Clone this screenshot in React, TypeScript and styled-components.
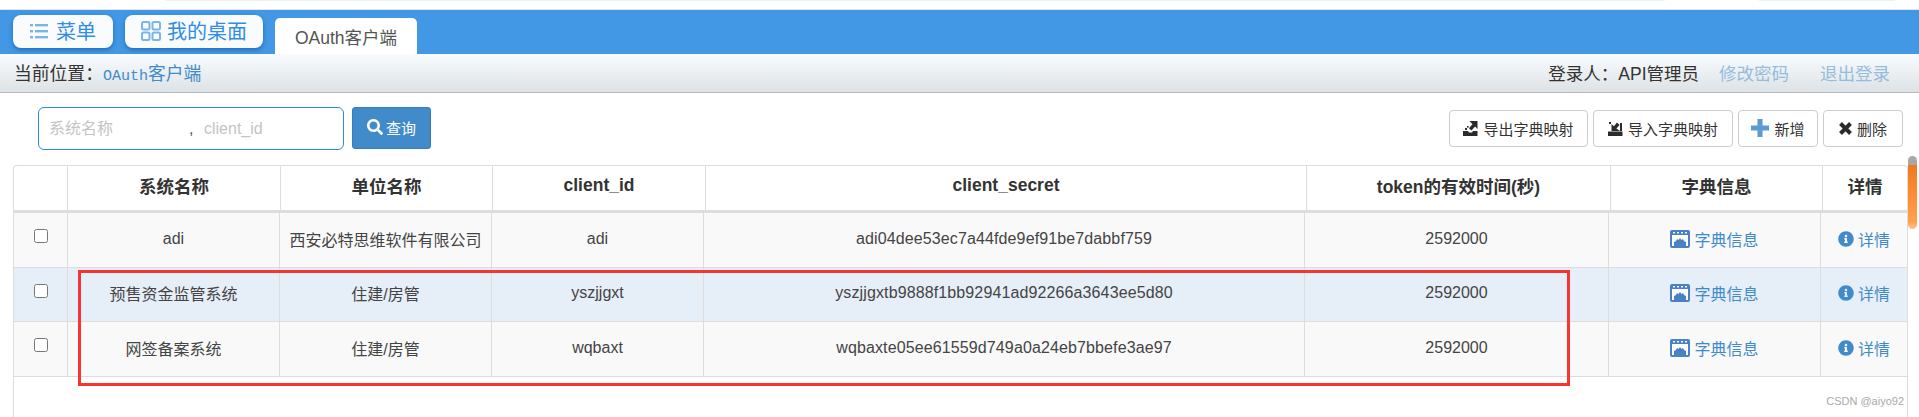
import React from 'react';
import styled, { createGlobalStyle } from 'styled-components';
import { FaSearch, FaInfoCircle } from 'react-icons/fa';

const FONT = '"Liberation Sans", "Noto Sans CJK SC", sans-serif';

const GlobalStyle = createGlobalStyle`
  html, body {
    margin: 0;
    padding: 0;
    height: 417px;
    overflow: hidden;
    background: #fff;
    font-family: ${FONT};
  }
  * { box-sizing: border-box; }
`;

const Page = styled.div`
  position: relative;
  width: 1919px;
  height: 417px;
  overflow: hidden;
  background: #fff;
`;

const TopStrip = styled.div`
  height: 10px;
  display: flex;
  align-items: flex-start;
  gap: 94px;
  padding-left: 165px;
  border-bottom: 1px solid #e2e4e6;
`;

const StripBar = styled.div`
  width: ${(p: { $w: number }) => p.$w}px;
  height: 1px;
  background: #eef0fa;
`;

const NavBar = styled.div`
  height: 44px;
  background: #4298e5;
  display: flex;
  align-items: flex-start;
  padding: 5px 0 0 13px;
  gap: 12px;
`;

const NavButton = styled.button`
  height: 33px;
  width: ${(p: { $w: number }) => p.$w}px;
  display: flex;
  align-items: center;
  justify-content: center;
  gap: 6px;
  padding: 0 0 2px;
  border: 0;
  border-radius: 8px;
  background: #fafbfd;
  box-shadow: 0 2px 4px rgba(20, 90, 170, 0.7);
  color: #2e8de8;
  font: 20px ${FONT};
`;

const Tab = styled.div`
  width: 142px;
  height: 36px;
  margin-top: 3px;
  display: flex;
  align-items: center;
  justify-content: center;
  background: #fff;
  border-radius: 5px 5px 0 0;
  color: #555;
  font-size: 17.5px;
`;

const CrumbBar = styled.div`
  height: 39px;
  display: flex;
  align-items: center;
  justify-content: space-between;
  padding: 0 29px 2px 14px;
  background: linear-gradient(#f8fcfe, #dde2e6);
  border-bottom: 1px solid #b2babf;
  font-size: 17.5px;
  color: #333;
`;

const Crumb = styled.div`
  display: flex;
  align-items: center;
  font-size: 17.8px;
`;

const CrumbLink = styled.span`
  color: #428bca;
`;

const CrumbMono = styled.span`
  font-family: "Liberation Mono", monospace;
  font-size: 15px;
`;

const UserInfo = styled.div`
  display: flex;
  align-items: center;
  gap: 20px;
`;

const UserLink = styled.a`
  color: #96bcdd;
  margin-left: ${(p: { $gap?: number }) => p.$gap ?? 0}px;
`;

const Toolbar = styled.div`
  height: 72px;
  display: flex;
  justify-content: space-between;
  padding: 14px 16px 0 38px;
`;

const SearchGroup = styled.div`
  display: flex;
  gap: 8px;
  height: 43px;
`;

const SearchField = styled.div`
  width: 306px;
  display: flex;
  align-items: center;
  padding-left: 10px;
  border: 1px solid #2d8ae0;
  border-radius: 6px;
  color: #555;
  font-size: 16px;
`;

const SearchInput = styled.input`
  width: ${(p: { $w: number }) => p.$w}px;
  border: 0;
  outline: 0;
  padding: 0;
  background: transparent;
  font: 16px ${FONT};
  &::placeholder { color: #c4c4c4; opacity: 1; }
`;

const Comma = styled.span`
  width: 15px;
`;

const QueryButton = styled.button`
  width: 79px;
  height: 42px;
  display: flex;
  align-items: center;
  justify-content: center;
  gap: 3px;
  padding: 0 0 2px;
  border: 1px solid #357ebd;
  border-radius: 3px;
  background: #428bca;
  color: #fff;
  font: 15px ${FONT};
`;

const ActionGroup = styled.div`
  display: flex;
  gap: 5px;
  padding-top: 3px;
`;

const ActionButton = styled.button`
  width: ${(p: { $w: number }) => p.$w}px;
  height: 37px;
  display: flex;
  align-items: center;
  justify-content: center;
  gap: 5px;
  padding: 0 0 1px;
  border: 1px solid #ccc;
  border-radius: 4px;
  background: #fff;
  color: #333;
  font: 15px ${FONT};
`;

const TableFrame = styled.div`
  margin-left: 13px;
  width: 1895px;
  height: 260px;
  border: 1px solid #ddd;
  border-bottom: 0;
  border-radius: 4px 4px 0 0;
`;

const HeadRow = styled.div`
  display: grid;
  grid-template-columns: 54px 213px 212px 213px 601px 304px 212px 84px;
  height: 47px;
  border-bottom: 3px solid #ddd;
`;

const HeadCell = styled.div`
  display: flex;
  align-items: center;
  justify-content: center;
  padding-bottom: 5px;
  border-right: 1px solid #ddd;
  font-size: 17.5px;
  font-weight: 700;
  color: #333;
  &:last-child { border-right: 0; }
`;

const BodyRow = styled.div`
  display: grid;
  grid-template-columns: 54px 212px 212px 212px 601px 304px 212px 86px;
  height: ${(p: { $h: number; $active?: boolean }) => p.$h}px;
  background: ${(p) => (p.$active ? '#e6eef8' : '#f9f9f9')};
  border-bottom: 1px solid #ddd;
`;

const Cell = styled.div`
  display: flex;
  align-items: center;
  justify-content: center;
  padding-bottom: 3px;
  border-right: 1px solid #ddd;
  font-size: 16px;
  color: #444;
  white-space: nowrap;
  &:last-child { border-right: 0; }
`;

const CheckCell = styled(Cell)`
  padding-bottom: 8px;
`;

const SecretCell = styled(Cell)`
  letter-spacing: 0.12px;
`;

const RowCheck = styled.input`
  width: 14px;
  height: 14px;
  margin: 0;
`;

const CellLink = styled.a`
  display: flex;
  align-items: center;
  gap: 4px;
  color: #428bca;
`;

const RedMark = styled.div`
  position: absolute;
  left: 78px;
  top: 270px;
  width: 1492px;
  height: 116px;
  border: 3px solid #f83436;
  pointer-events: none;
`;

const Watermark = styled.div`
  position: absolute;
  right: 15px;
  top: 395px;
  font-size: 11px;
  color: #a9a9a9;
`;

const ScrollThumb = styled.div`
  position: absolute;
  left: 1908px;
  top: 156px;
  width: 9px;
  height: 73px;
  border-radius: 5px;
  background: linear-gradient(#a8a8a8 0, #a8a8a8 12%, #ee7a1e 12%, #ff8f3a 60%, #ffa04f 90%, #ffc58e 100%);
`;

const ListIcon = () => (
  <svg width="20" height="18" viewBox="0 0 20 18" fill="#7ab5ea">
    <rect x="0" y="2" width="3" height="2.4" />
    <rect x="5" y="2" width="13" height="2.4" />
    <rect x="0" y="8" width="3" height="2.4" />
    <rect x="5" y="8" width="13" height="2.4" />
    <rect x="0" y="14" width="3" height="2.4" />
    <rect x="5" y="14" width="13" height="2.4" />
  </svg>
);

const GridIcon = () => (
  <svg width="20" height="20" viewBox="0 0 20 20" fill="none" stroke="#7ab5ea" strokeWidth="2">
    <rect x="1" y="1" width="7.5" height="7.5" rx="1.5" />
    <rect x="11.5" y="1" width="7.5" height="7.5" rx="1.5" />
    <rect x="1" y="11.5" width="7.5" height="7.5" rx="1.5" />
    <rect x="11.5" y="11.5" width="7.5" height="7.5" rx="1.5" />
  </svg>
);

const ExportIcon = () => (
  <svg width="15" height="15" viewBox="0 0 15 15" fill="#2b2b2b">
    <path d="M0 10h5l1 1.5h3L10 10h4.5v5H0z" />
    <path d="M6.5 0h8v8l-2.4-2.4-3.6 4-2.6-2.4 3.6-4z" />
    <rect x="2" y="7" width="2" height="2" />
    <rect x="4" y="5" width="1.6" height="1.6" />
  </svg>
);

const ImportIcon = () => (
  <svg width="15" height="15" viewBox="0 0 15 15" fill="#2b2b2b">
    <path d="M0 10.5h14.5V15H0z" />
    <path d="M12 10H3.5V3l2.4 2.2L9 1.5l2.6 2.4L8.4 7.4z" />
    <rect x="12" y="2" width="2" height="8" />
    <rect x="1" y="1" width="2" height="2" />
  </svg>
);

const PlusIcon = () => (
  <svg width="18" height="18" viewBox="0 0 18 18" fill="#5b9bd5">
    <path d="M6.5 0h5v6.5H18v5h-6.500V18h-5v-6.500H0v-5h6.500z" />
  </svg>
);

const CrossIcon = () => (
  <svg width="13" height="13" viewBox="0 0 13 13" fill="none" stroke="#2b2b2b" strokeWidth="4">
    <path d="M1.500 1.500l10 10M11.500 1.500l-10 10" />
  </svg>
);

const WindowIcon = () => (
  <svg width="20" height="18" viewBox="0 0 20 18">
    <rect width="20" height="18" rx="2" fill="#4a80c4" />
    <rect x="2" y="5" width="16" height="11" fill="#fff" />
    <rect x="3" y="2" width="2" height="1.4" fill="#fff" />
    <rect x="7" y="2" width="2" height="1.4" fill="#fff" />
    <rect x="11" y="2" width="2" height="1.4" fill="#fff" />
    <rect x="15" y="2" width="2" height="1.4" fill="#fff" />
    <path d="M4 16v-4l2-1 1-2 1.500 1 1.500-2 1.500 2 1.500-1 1 2 2 1v4z" fill="#4a80c4" />
  </svg>
);

const rows = [
  { name: 'adi', unit: '西安必特思维软件有限公司', id: 'adi', secret: 'adi04dee53ec7a44fde9ef91be7dabbf759', h: 55 },
  { name: '预售资金监管系统', unit: '住建/房管', id: 'yszjjgxt', secret: 'yszjjgxtb9888f1bb92941ad92266a3643ee5d80', h: 54, active: true },
  { name: '网签备案系统', unit: '住建/房管', id: 'wqbaxt', secret: 'wqbaxte05ee61559d749a0a24eb7bbefe3ae97', h: 55 },
];

const heads = ['', '系统名称', '单位名称', 'client_id', 'client_secret', 'token的有效时间(秒)', '字典信息', '详情'];

export default function App() {
  return (
    <Page>
      <GlobalStyle />
      <TopStrip>
        <StripBar $w={1500} />
        <StripBar $w={136} />
      </TopStrip>
      <NavBar>
        <NavButton $w={100}><ListIcon />菜单</NavButton>
        <NavButton $w={138}><GridIcon />我的桌面</NavButton>
        <Tab>OAuth客户端</Tab>
      </NavBar>
      <CrumbBar>
        <Crumb>
          当前位置：
          <CrumbLink><CrumbMono>OAuth</CrumbMono>客户端</CrumbLink>
        </Crumb>
        <UserInfo>
          <span>登录人：API管理员</span>
          <UserLink>修改密码</UserLink>
          <UserLink $gap={11}>退出登录</UserLink>
        </UserInfo>
      </CrumbBar>
      <Toolbar>
        <SearchGroup>
          <SearchField>
            <SearchInput $w={140} placeholder="系统名称" readOnly />
            <Comma>,</Comma>
            <SearchInput $w={130} placeholder="client_id" readOnly />
          </SearchField>
          <QueryButton><FaSearch size={16} />查询</QueryButton>
        </SearchGroup>
        <ActionGroup>
          <ActionButton $w={139}><ExportIcon />导出字典映射</ActionButton>
          <ActionButton $w={140}><ImportIcon />导入字典映射</ActionButton>
          <ActionButton $w={80}><PlusIcon />新增</ActionButton>
          <ActionButton $w={80}><CrossIcon />删除</ActionButton>
        </ActionGroup>
      </Toolbar>
      <TableFrame>
        <HeadRow>
          {heads.map((h, i) => <HeadCell key={i}>{h}</HeadCell>)}
        </HeadRow>
        {rows.map((r) => (
          <BodyRow key={r.id} $h={r.h} $active={r.active}>
            <CheckCell><RowCheck type="checkbox" /></CheckCell>
            <Cell>{r.name}</Cell>
            <Cell>{r.unit}</Cell>
            <Cell>{r.id}</Cell>
            <SecretCell>{r.secret}</SecretCell>
            <Cell>2592000</Cell>
            <Cell><CellLink><WindowIcon />字典信息</CellLink></Cell>
            <Cell><CellLink><FaInfoCircle size={16} />详情</CellLink></Cell>
          </BodyRow>
        ))}
      </TableFrame>
      <RedMark />
      <ScrollThumb />
      <Watermark>CSDN @aiyo92</Watermark>
    </Page>
  );
}
